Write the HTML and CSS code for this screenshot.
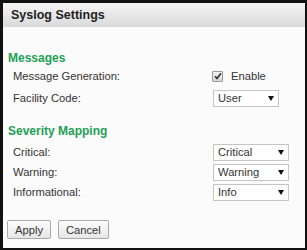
FILE: index.html
```html
<!DOCTYPE html>
<html>
  <head>
    <title>Syslog Settings</title>
    <link rel="stylesheet" href="styles.css">
  </head>
  <body>
    <div class="panel">
      <div class="panel-header">Syslog Settings</div>
      <div class="panel-body">
        <h3 class="section-title first">Messages</h3>
        <div class="form-row wide">
          <label>Message Generation:</label>
          <label class="check">
            <span class="check-box">
              <svg width="8" height="8" viewBox="0 0 8 8"><path d="M1 4.2 L3 6.4 L7 1.2" fill="none" stroke="#333" stroke-width="1.6"/></svg>
            </span>
            Enable
          </label>
        </div>
        <div class="form-row wide">
          <label>Facility Code:</label>
          <div class="select short"><select><option>User</option></select></div>
        </div>

        <h3 class="section-title">Severity Mapping</h3>
        <div class="form-row">
          <label>Critical:</label>
          <div class="select"><select><option>Critical</option></select></div>
        </div>
        <div class="form-row">
          <label>Warning:</label>
          <div class="select"><select><option>Warning</option></select></div>
        </div>
        <div class="form-row">
          <label>Informational:</label>
          <div class="select"><select><option>Info</option></select></div>
        </div>

        <div class="buttons">
          <button>Apply</button>
          <button>Cancel</button>
        </div>
      </div>
    </div>
  </body>
</html>
```

FILE: styles.css
```css
body {
  margin: 0;
  background-color: #111;
  font-family: "Liberation Sans", Arial, sans-serif;
}

.panel {
  margin: 3px 2px 2px 3px;
  height: 245px;
  background-color: #fbfbfb;
  overflow: hidden;
}

.panel-header {
  height: 24px;
  line-height: 24px;
  padding-left: 8px;
  font-size: 12.5px;
  font-weight: bold;
  color: #222;
  background: linear-gradient(#f4f4f4, #dadada);
}

.panel-body {
  padding: 0 5px;
}

.section-title {
  margin: 17px 0 0 0;
  height: 14px;
  line-height: 14px;
  font-size: 12px;
  font-weight: bold;
  color: #1fa055;
}

.section-title.first {
  margin-top: 24px;
}

.form-row {
  display: grid;
  grid-template-columns: 200px auto;
  align-items: center;
  height: 18px;
  margin-top: 2px;
  padding-left: 5px;
  font-size: 11.2px;
  color: #333;
}

.form-row.wide {
  margin-top: 4px;
}

.section-title + .form-row {
  margin-top: 5px;
}

.section-title.first + .form-row {
  margin-top: 2px;
}

.check {
  display: flex;
  align-items: center;
  margin-left: -1px;
}

.check-box {
  display: inline-flex;
  align-items: center;
  justify-content: center;
  width: 9px;
  height: 9px;
  margin-right: 8px;
  border: 1px solid #9a9a9a;
  border-radius: 1px;
  background: linear-gradient(#f2f2f2, #d6d6d6);
}

.select {
  position: relative;
  width: 76px;
}

.select.short {
  width: 66px;
}

.select select {
  appearance: none;
  width: 100%;
  height: 17px;
  margin: 0;
  padding: 0 0 0 4px;
  border: 1px solid #c4c4c4;
  border-radius: 0;
  background-color: #fff;
  font-family: inherit;
  font-size: 11.2px;
  color: #333;
}

.select::after {
  content: "";
  position: absolute;
  right: 5px;
  top: 6px;
  border-left: 3px solid transparent;
  border-right: 3px solid transparent;
  border-top: 5px solid #111;
  pointer-events: none;
}

.buttons {
  display: flex;
  gap: 7px;
  margin-top: 19px;
  margin-left: -1px;
}

.buttons button {
  height: 19px;
  padding: 0 7px;
  border: 1px solid #a9a9a9;
  border-radius: 2px;
  background: linear-gradient(#fdfdfd, #e6e6e6);
  font-family: inherit;
  font-size: 11.2px;
  color: #333;
}
```
